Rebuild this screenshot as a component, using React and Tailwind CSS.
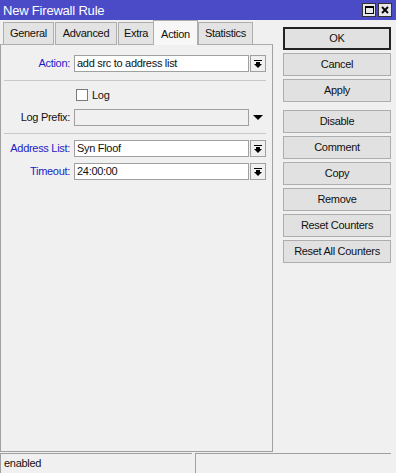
import React from 'react'

const font = { fontFamily: '"Liberation Sans", Arial, sans-serif' }

function DropButton() {
  return (
    <div className="w-[16px] h-[17px] border border-[#a0a0a0] bg-[#f0f0f0] flex items-center justify-center">
      <svg width="8" height="8" viewBox="0 0 8 8">
        <rect x="0" y="0" width="8" height="1" fill="#000" />
        <path d="M2 2h4v2h2L4 8 0 4h2z" fill="#000" />
      </svg>
    </div>
  )
}

function Field({ label, value, blue }) {
  return (
    <div className="flex items-center h-[17px]">
      <div className={'w-[68px] text-right pr-[1px] ' + (blue ? 'text-[#1c1cc8]' : 'text-black')}>{label}</div>
      <div className="ml-[3px] w-[175px] h-[17px] border border-[#a0a0a0] bg-white flex items-center pl-[2px] leading-none">
        {value}
      </div>
      <div className="ml-[1px]">
        <DropButton />
      </div>
    </div>
  )
}

function Btn({ children, primary }) {
  return (
    <button
      type="button"
      className={
        'w-[108px] h-[23px] bg-[#e1e1e1] flex items-center justify-center leading-none ' +
        (primary ? 'border-2 border-[#222]' : 'border border-[#adadad]')
      }
    >
      {children}
    </button>
  )
}

export default function App() {
  const tabs = [
    { name: 'General', w: 'w-[51px]' },
    { name: 'Advanced', w: 'w-[62px]' },
    { name: 'Extra', w: 'w-[36px]' },
    { name: 'Action', w: 'w-[45px]', active: true },
    { name: 'Statistics', w: 'w-[55px]' },
  ]

  return (
    <div style={font} className="w-[396px] h-[473px] bg-[#f0f0f0] flex flex-col text-[11px] tracking-[-0.3px] text-[#111] overflow-hidden">
      {/* Title bar */}
      <div className="h-[20px] bg-[#4b4bc8] flex items-center justify-between pl-[3px] pr-[4px]">
        <span className="text-white text-[13px] tracking-[-0.2px] leading-none">New Firewall Rule</span>
        <div className="flex gap-[2px]">
          <div className="w-[14px] h-[14px] bg-[#e8e8e8] border border-[#333] flex items-center justify-center">
            <div className="w-[9px] h-[8px] border border-black border-t-2" />
          </div>
          <div className="w-[14px] h-[14px] bg-[#e8e8e8] border border-[#333] flex items-center justify-center">
            <svg width="8" height="8" viewBox="0 0 8 8">
              <path d="M1 1L7 7M7 1L1 7" stroke="#000" strokeWidth="1.8" />
            </svg>
          </div>
        </div>
      </div>

      <div className="flex flex-1">
        {/* Left: tabs + panel */}
        <div className="w-[273px] flex flex-col">
          <div className="flex items-end h-[25px]">
            <div className="w-[3px] h-[1px] bg-[#adadad]" />
            {tabs.map((t, i) => (
              <div
                key={t.name}
                className={
                  t.active
                    ? t.w + ' h-[25px] bg-[#f7f7f7] border-t border-l border-r border-[#adadad] flex items-start justify-center pt-[5px] -ml-px'
                    : t.w + ' h-[23px] bg-[#e3e3e3] border border-[#adadad] flex items-center justify-center' + (i > 0 && !tabs[i - 1].active ? ' ml-px' : '')
                }
              >
                {t.name}
              </div>
            ))}
            <div className="flex-1 h-[1px] bg-[#adadad]" />
          </div>
          <div className="flex-1 mb-[1px] border-l border-r border-b border-[#a0a0a0] flex flex-col px-[2px]">
            <div className="mt-[10px]">
              <Field label="Action:" value="add src to address list" blue />
            </div>
            <div className="mt-[8px] ml-[1px] w-[262px] h-[1px] bg-[#c8c8c8]" />
            <div className="mt-[8px] flex items-center h-[12px]">
              <div className="ml-[73px] w-[12px] h-[12px] border border-[#7a7a7a] bg-white" />
              <span className="ml-[4px]">Log</span>
            </div>
            <div className="mt-[8px] flex items-center h-[17px]">
              <div className="w-[68px] text-right pr-[1px]">Log Prefix:</div>
              <div className="ml-[3px] w-[175px] h-[17px] border border-[#a0a0a0] bg-[#f0f0f0]" />
              <div className="w-[17px] flex justify-center">
                <svg width="10" height="6" viewBox="0 0 10 6">
                  <path d="M0 0h10L5 5z" fill="#000" />
                </svg>
              </div>
            </div>
            <div className="mt-[7px] ml-[1px] w-[262px] h-[1px] bg-[#c8c8c8]" />
            <div className="mt-[6px]">
              <Field label="Address List:" value="Syn Floof" blue />
            </div>
            <div className="mt-[6px]">
              <Field label="Timeout:" value="24:00:00" blue />
            </div>
          </div>
        </div>

        {/* Right: buttons */}
        <div className="ml-[10px] pt-[7px] flex flex-col gap-[3px]">
          <Btn primary>OK</Btn>
          <Btn>Cancel</Btn>
          <Btn>Apply</Btn>
          <div className="mt-[5px] flex flex-col gap-[3px]">
            <Btn>Disable</Btn>
            <Btn>Comment</Btn>
            <Btn>Copy</Btn>
            <Btn>Remove</Btn>
            <Btn>Reset Counters</Btn>
            <Btn>Reset All Counters</Btn>
          </div>
        </div>
      </div>

      {/* Status bar */}
      <div className="h-[20px] flex gap-[3px] pr-[5px]">
        <div className="w-[192px] border-t border-l border-[#a0a0a0] flex items-center pl-[3px]">enabled</div>
        <div className="flex-1 border-t border-l border-[#a0a0a0]" />
      </div>
    </div>
  )
}
